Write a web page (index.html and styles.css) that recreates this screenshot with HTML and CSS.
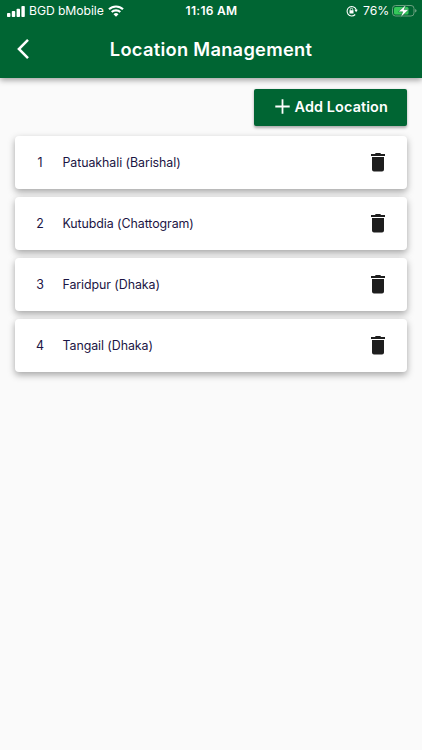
FILE: index.html
```html
<!DOCTYPE html>
<html lang="en">
<head>
<meta charset="utf-8">
<title>Location Management</title>
<link rel="stylesheet" href="styles.css">
</head>
<body>
<svg class="defs" aria-hidden="true">
  <symbol id="trash" viewBox="0 0 14 19"><path fill="#1e1e1e" d="M0 1.1h3.9l.9-1h4.4l.9 1H14v2H0zM1 4.1h12v12.4a2 2 0 0 1-2 2H3a2 2 0 0 1-2-2z"/></symbol>
</svg>
<header class="header">
  <div class="status">
    <div class="carrier">
      <svg width="18" height="11" viewBox="0 0 18 11" fill="#fff"><rect x="0" y="7" width="3.4" height="4" rx=".8"/><rect x="4.8" y="5" width="3.4" height="6" rx=".8"/><rect x="9.6" y="2.7" width="3.4" height="8.3" rx=".8"/><rect x="14.4" y="0" width="3.4" height="11" rx=".8"/></svg>
      <span class="carrier-name">BGD bMobile</span>
      <svg class="wifi" width="16" height="12" viewBox="0 0 16 12" fill="none" stroke="#fff" stroke-width="2.1"><path d="M1 4.3a10 10 0 0 1 14 0M3.7 7.1a6.2 6.2 0 0 1 8.6 0"/><path fill="#fff" stroke="none" d="M8 11.7 5.5 9.2a3.6 3.6 0 0 1 5 0z"/></svg>
    </div>
    <div class="clock">11:16 AM</div>
    <div class="power">
      <svg width="12" height="12" viewBox="0 0 12 12" fill="none" stroke="#fff"><path stroke-width="1.1" d="M9.2 9.5A4.7 4.7 0 1 1 10.3 5"/><path fill="#fff" stroke="none" d="M8.4 4.8h3.4l-1.7 2.4zM3.5 5.3h4v3.1h-4z"/><path stroke-width=".8" d="M4.3 5.5V4.4a1.2 1.2 0 0 1 2.4 0v1.1"/></svg>
      <span class="percent">76%</span>
      <svg width="25" height="14" viewBox="0 0 25 14"><rect x=".5" y="1.5" width="21.5" height="10.5" rx="3" fill="none" stroke="#6aa07f"/><path fill="#7ead91" d="M23.2 5c1.8.6 1.8 3 0 3.6z"/><rect x="2" y="3" width="14.5" height="7.5" rx="1.5" fill="#35c75a"/><path fill="#fff" stroke="#006533" stroke-width=".5" d="M14.2.5 6.2 7.8h4.5L8.6 13.4l8.2-7.8h-4.7z"/></svg>
    </div>
  </div>
  <div class="titlebar">
    <svg class="back" width="12" height="20" viewBox="0 0 12 20" fill="none" stroke="#fff" stroke-width="2.5"><path d="M11 .9 1.9 10l9.1 9.1"/></svg>
    <h1 class="title">Location Management</h1>
  </div>
</header>
<main class="content">
  <button class="add">
    <svg width="15" height="15" viewBox="0 0 15 15" stroke="#fff" stroke-width="1.8"><path d="M7.5 .3v14.4M.3 7.5h14.4"/></svg>
    <span>Add Location</span>
  </button>
  <ul class="list">
    <li class="card"><span class="num">1</span><span class="name">Patuakhali (Barishal)</span><svg width="14" height="19"><use href="#trash"/></svg></li>
    <li class="card"><span class="num">2</span><span class="name">Kutubdia (Chattogram)</span><svg width="14" height="19"><use href="#trash"/></svg></li>
    <li class="card"><span class="num">3</span><span class="name">Faridpur (Dhaka)</span><svg width="14" height="19"><use href="#trash"/></svg></li>
    <li class="card"><span class="num">4</span><span class="name">Tangail (Dhaka)</span><svg width="14" height="19"><use href="#trash"/></svg></li>
  </ul>
</main>
</body>
</html>
```
FILE: styles.css
```css
* { box-sizing: border-box; }
body { margin: 0; min-height: 750px; background: #fafafa; font-family: Inter, sans-serif; }
svg { display: block; flex: none; }
.defs { display: none; }
.header { height: 77.5px; background: #006533; color: #fff; box-shadow: 0 2px 6px rgba(0,0,0,.38); }
.status { height: 22px; display: grid; grid-template-columns: 1fr auto 1fr; align-items: center; padding: 0 6px 0 7px; font-size: 12.2px; line-height: 22px; }
.carrier, .power { display: flex; align-items: center; }
.carrier-name { margin-left: 4px; width: 75px; white-space: nowrap; letter-spacing: -.08px; }
.wifi { margin-left: 4px; }
.clock { font-size: 12px; font-weight: 600; letter-spacing: .3px; }
.power { justify-content: flex-end; margin-right: -1px; }
.percent { margin: 0 3px 0 5px; letter-spacing: -.1px; }
.titlebar { height: 54px; display: grid; grid-template-columns: 34px 1fr 34px; align-items: center; }
.back { margin-left: 16.5px; }
.title { margin: 0; text-align: center; font-size: 18.3px; font-weight: 600; letter-spacing: .28px; white-space: nowrap; }
.content { padding: 11.5px 15px 0 15px; display: flex; flex-direction: column; align-items: stretch; }
.add { align-self: flex-end; width: 152.5px; height: 36.5px; margin-right: .5px; padding: 0 0 1px 2px; border: 0; border-radius: 2px; background: #006533; color: #fff; display: flex; align-items: center; justify-content: center; gap: 5px; font: 600 14.4px Inter, sans-serif; letter-spacing: .12px; white-space: nowrap; box-shadow: 0 1.5px 3px rgba(0,0,0,.32); }
.list { list-style: none; margin: 10.5px 0 0; padding: 0; display: flex; flex-direction: column; gap: 8.5px; }
.card { height: 52.5px; padding: 0 22px 0 20px; display: flex; align-items: center; background: #fff; border-radius: 4px; box-shadow: 0 3px 7px rgba(0,0,0,.34); color: #1b1544; font-size: 12.4px; letter-spacing: -.07px; }
.num { width: 10px; text-align: center; margin-right: 17.5px; }
.name { flex: 1; }
```
